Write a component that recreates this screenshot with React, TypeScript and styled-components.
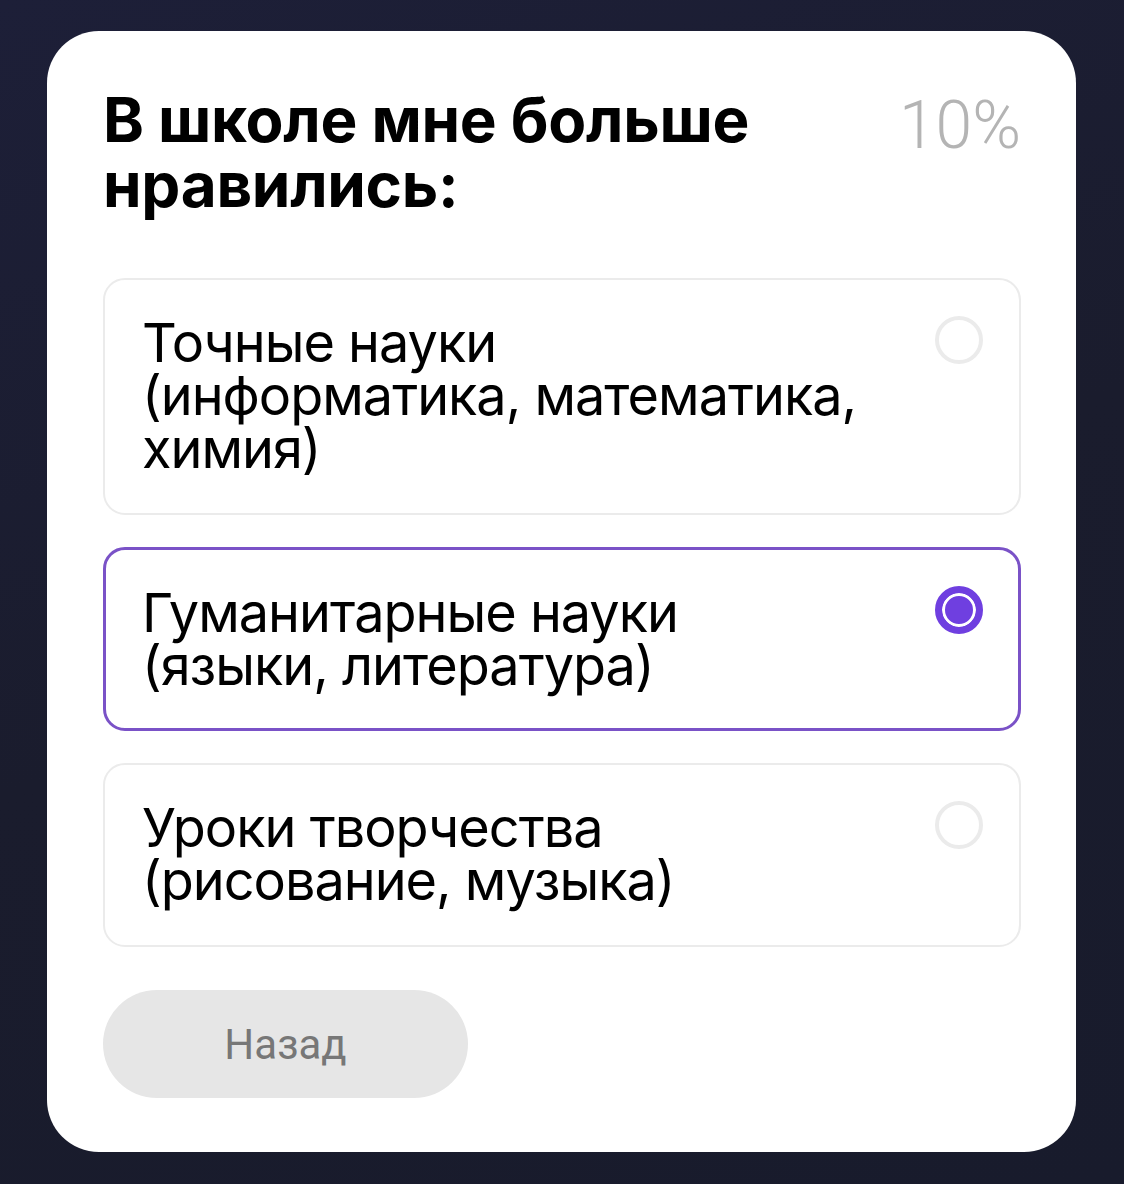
import React, { useState } from 'react'
import styled, { createGlobalStyle } from 'styled-components'

const GlobalStyle = createGlobalStyle`
  html, body {
    margin: 0;
    padding: 0;
    background: #1b1c2e;
  }
  * {
    box-sizing: border-box;
  }
`

const options = [
  { id: 'exact', lines: ['Точные науки', '(информатика, математика,', 'химия)'] },
  { id: 'human', lines: ['Гуманитарные науки', '(языки, литература)'] },
  { id: 'art', lines: ['Уроки творчества', '(рисование, музыка)'] },
]

const App = () => {
  const [selected, setSelected] = useState('human')

  return (
    <>
      <GlobalStyle />
      <Page>
        <Card>
          <Header>
            <Title>
              В школе мне больше
              <br />
              нравились:
            </Title>
            <Percent>10%</Percent>
          </Header>

          <List>
            {options.map((o) => (
              <Option key={o.id} $active={selected === o.id} onClick={() => setSelected(o.id)}>
                <OptionText>
                  {o.lines.map((l) => (
                    <span key={l}>{l}</span>
                  ))}
                </OptionText>
                <Radio $active={selected === o.id} />
              </Option>
            ))}
          </List>

          <BackButton>Назад</BackButton>
        </Card>
      </Page>
    </>
  )
}

export default App

const Page = styled.div`
  min-height: 1184px;
  padding: 31px 48px 32px 47px;
  background: linear-gradient(160deg, #1d1f38 0%, #1a1c2d 50%, #181b2c 100%);
`

const Card = styled.div`
  display: flex;
  flex-direction: column;
  align-items: flex-start;
  height: 1121px;
  padding: 56px 55px 53px 56px;
  background: #ffffff;
  border-radius: 52px;
`

const Header = styled.div`
  display: flex;
  justify-content: space-between;
  align-items: flex-start;
  width: 100%;
`

const Title = styled.h1`
  margin: 0;
  font-family: Inter, 'Noto Sans', sans-serif;
  font-weight: 700;
  font-size: 62px;
  line-height: 65px;
  letter-spacing: -0.3px;
  color: #000;
`

const Percent = styled.div`
  font-family: Roboto, sans-serif;
  font-weight: 300;
  font-size: 66px;
  line-height: 65px;
  margin-top: 6px;
  color: #b4b4b4;
`

const List = styled.div`
  display: flex;
  flex-direction: column;
  gap: 32px;
  width: 100%;
  margin-top: 61px;
`

const Option = styled.div<{ $active: boolean }>`
  display: flex;
  justify-content: space-between;
  align-items: flex-start;
  padding: ${(p) => (p.$active ? '36px 35px 36px 36px' : '36px 36px 38px 37px')};
  border: ${(p) => (p.$active ? '3px solid #7a52c7' : '2px solid #ebebeb')};
  border-radius: 22px;
  cursor: pointer;
`

const OptionText = styled.div`
  display: flex;
  flex-direction: column;
  font-family: Inter, 'Noto Sans', sans-serif;
  font-weight: 400;
  font-size: 54px;
  line-height: 53px;
  letter-spacing: -1px;
  color: #000;
`

const Radio = styled.div<{ $active: boolean }>`
  flex-shrink: 0;
  width: 48px;
  height: 48px;
  margin-top: 0;
  border-radius: 50%;
  border: ${(p) => (p.$active ? '7px solid #6f3fe0' : '4px solid #ebebeb')};
  background: ${(p) => (p.$active ? '#6f3fe0' : 'transparent')};
  box-shadow: ${(p) => (p.$active ? 'inset 0 0 0 3px #ffffff' : 'none')};
`

const BackButton = styled.button`
  width: 365px;
  height: 108px;
  margin-top: 43px;
  border: none;
  border-radius: 54px;
  background: #e6e6e6;
  font-family: Roboto, sans-serif;
  font-size: 42px;
  color: #777777;
  cursor: pointer;
`
